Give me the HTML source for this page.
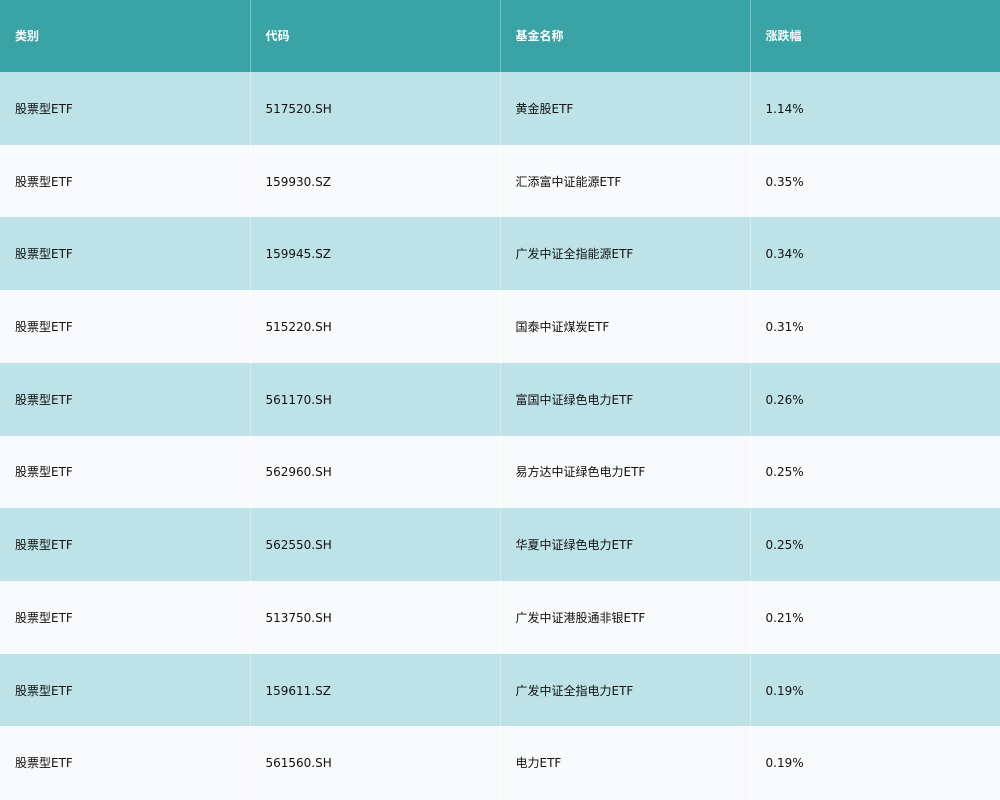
<!DOCTYPE html>
<html><head><meta charset="utf-8"><style>
*{margin:0;padding:0;box-sizing:border-box}
body{width:1000px;height:800px;overflow:hidden;background:#f8fafc;font-family:"DejaVu Sans","Noto Sans CJK SC",sans-serif;font-size:12px;line-height:16px;color:#111}
table{border-collapse:collapse;width:1000px;table-layout:fixed}
td,th{width:250px;height:72.73px;padding:1px 0 0 15px;text-align:left;vertical-align:middle;border-right:1px solid rgba(255,255,255,0.35);font-weight:normal}
th{background:#3aa3a6;color:#fff;font-weight:bold;height:72px;padding:0 0 1px 15px}
tr:nth-child(even) td{background:#bde3e9}
tr:nth-child(odd) td{background:#f8fafc;border-right-color:#fff}
</style></head><body>
<table>
<tr><th>类别</th><th>代码</th><th>基金名称</th><th>涨跌幅</th></tr>
<tr><td>股票型ETF</td><td>517520.SH</td><td>黄金股ETF</td><td>1.14%</td></tr>
<tr><td>股票型ETF</td><td>159930.SZ</td><td>汇添富中证能源ETF</td><td>0.35%</td></tr>
<tr><td>股票型ETF</td><td>159945.SZ</td><td>广发中证全指能源ETF</td><td>0.34%</td></tr>
<tr><td>股票型ETF</td><td>515220.SH</td><td>国泰中证煤炭ETF</td><td>0.31%</td></tr>
<tr><td>股票型ETF</td><td>561170.SH</td><td>富国中证绿色电力ETF</td><td>0.26%</td></tr>
<tr><td>股票型ETF</td><td>562960.SH</td><td>易方达中证绿色电力ETF</td><td>0.25%</td></tr>
<tr><td>股票型ETF</td><td>562550.SH</td><td>华夏中证绿色电力ETF</td><td>0.25%</td></tr>
<tr><td>股票型ETF</td><td>513750.SH</td><td>广发中证港股通非银ETF</td><td>0.21%</td></tr>
<tr><td>股票型ETF</td><td>159611.SZ</td><td>广发中证全指电力ETF</td><td>0.19%</td></tr>
<tr><td>股票型ETF</td><td>561560.SH</td><td>电力ETF</td><td>0.19%</td></tr>
</table>
</body></html>
